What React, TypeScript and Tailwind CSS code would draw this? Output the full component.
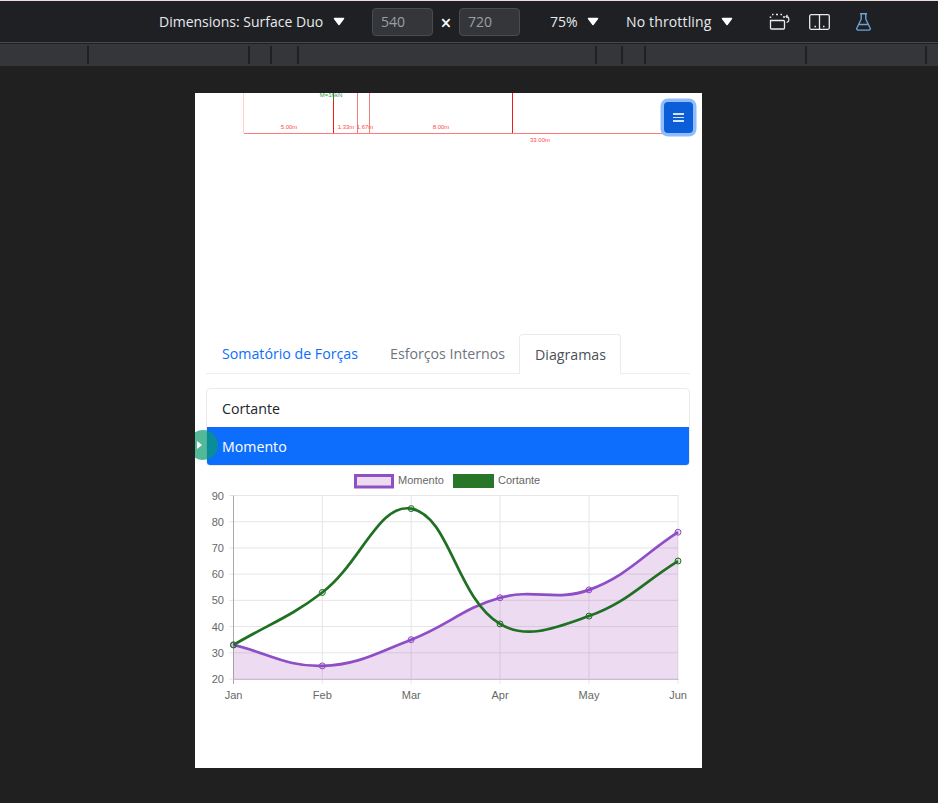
import React from 'react';

type Pt = { x: number; y: number };

const xs = [233.5, 322.3, 411.2, 500, 589, 678];
const yFor = (v: number) => 679 - ((v - 20) * 183.5) / 70;
const toPts = (vals: number[]): Pt[] => vals.map((v, i) => ({ x: xs[i], y: yFor(v) }));

// same bezier control points chart.js uses for tension 0.4
function splinePath(pts: Pt[], t = 0.4) {
  const ctrl = pts.map((cur, i) => {
    const prev = pts[i - 1] ?? cur;
    const next = pts[i + 1] ?? cur;
    const d01 = Math.hypot(cur.x - prev.x, cur.y - prev.y);
    const d12 = Math.hypot(next.x - cur.x, next.y - cur.y);
    const sum = d01 + d12 || 1;
    const fa = (t * d01) / sum;
    const fb = (t * d12) / sum;
    return {
      p: { x: cur.x - fa * (next.x - prev.x), y: cur.y - fa * (next.y - prev.y) },
      n: { x: cur.x + fb * (next.x - prev.x), y: cur.y + fb * (next.y - prev.y) },
    };
  });
  let d = `M${pts[0].x} ${pts[0].y}`;
  for (let i = 1; i < pts.length; i++) {
    d += ` C${ctrl[i - 1].n.x} ${ctrl[i - 1].n.y} ${ctrl[i].p.x} ${ctrl[i].p.y} ${pts[i].x} ${pts[i].y}`;
  }
  return d;
}

const momento = toPts([33, 25, 35, 51, 54, 76]);
const cortante = toPts([33, 53, 85, 41, 44, 65]);
const ticks = [90, 80, 70, 60, 50, 40, 30, 20];
const months = ['Jan', 'Feb', 'Mar', 'Apr', 'May', 'Jun'];

const Caret = () => (
  <svg width="12" height="9" viewBox="0 0 12 9" className="block">
    <path d="M1.5 1.5h9L6 7.5z" fill="#fff" stroke="#fff" strokeWidth="1.5" strokeLinejoin="round" />
  </svg>
);

const Toolbar = () => (
  <div className="h-[43px] shrink-0 flex items-center border-t border-b border-t-[#f0dcdc] border-b-[#48494c] bg-[#1f2023] text-[14px] text-[#e8eaed] font-['Open_Sans',sans-serif]">
    <span className="ml-[159px] w-[165px] whitespace-nowrap">Dimensions: Surface Duo</span>
    <span className="ml-[9px]"><Caret /></span>
    <div className="ml-[27px] w-[61px] h-[28px] pl-2 flex items-center rounded-sm border border-[#4a4b4e] bg-[#35363a] text-[#9aa0a6]">540</div>
    <span className="w-[26px] pt-[3px] text-center text-[19px] leading-none font-semibold text-white">×</span>
    <div className="w-[61px] h-[28px] pl-2 flex items-center rounded-sm border border-[#4a4b4e] bg-[#35363a] text-[#9aa0a6]">720</div>
    <span className="ml-[30px] w-[29px]">75%</span>
    <span className="ml-[8px]"><Caret /></span>
    <span className="ml-[27px] w-[87px] tracking-[0.15px] whitespace-nowrap">No throttling</span>
    <span className="ml-[8px]"><Caret /></span>
    <svg width="22" height="18" viewBox="0 0 22 18" fill="none" stroke="#e8eaed" strokeWidth="1.3" className="ml-[36px]">
      <path d="M1.5 7.5h13a1 1 0 0 1 1 1v6.5a1 1 0 0 1-1 1h-12a1 1 0 0 1-1-1z" />
      <path d="M1.5 5V3.5M3 1.5h1.5M7 1.5h2M11.5 1.5h1.5M15 3v2" strokeWidth="1.5" />
      <path d="M17.5 3.5c3 0 3.5 5.5 0 6M18.5 2l-1.5 1.5 1.5 1.5" strokeWidth="1.1" />
    </svg>
    <svg width="21" height="16" viewBox="0 0 21 16" fill="none" stroke="#e8eaed" strokeWidth="1.3" className="ml-[18px]">
      <rect x="0.7" y="0.7" width="19.6" height="14.6" rx="1.5" />
      <path d="M10.5 1v14M5.5 12.5h1.5M14 12.5h1.5" />
    </svg>
    <svg width="15" height="18" viewBox="0 0 15 18" fill="none" stroke="#6ea3d8" strokeWidth="1.4" className="ml-[26px]">
      <path d="M4 .8h7M5.2 1v5.2L.9 15a1.4 1.4 0 0 0 1.3 2.1h10.6a1.4 1.4 0 0 0 1.3-2.1L9.8 6.2V1M3 11.5h9" />
    </svg>
  </div>
);

const Ruler = () => (
  <div className="h-[22px] mt-px shrink-0 flex items-stretch bg-[#35363a] py-[2px]">
    {[89, 161, 22, 27, 298, 26, 23, 161, 120].map((w, i) => (
      <div key={i} style={{ width: w }} className="border-r-2 border-[#1f2023]" />
    ))}
  </div>
);

const BeamDiagram = () => (
  <svg width="507" height="241" viewBox="195 93 507 241" className="block">
    <g fontFamily="Liberation Sans, sans-serif" fontSize="6" textAnchor="middle">
      <path d="M243.5 93v40" stroke="#ffd0d0" />
      <path d="M244 133.5h420" stroke="#ff7b7b" />
      <path d="M333.5 93v7" stroke="#1f8a2e" />
      <path d="M333.5 100v33" stroke="#f01c1c" />
      <path d="M357.5 93v40M369.5 93v40" stroke="#f27d7d" />
      <path d="M512.5 93v40" stroke="#f01c1c" />
      <text x="331" y="96.5" fill="#3c9a4c">M=16kN</text>
      <text x="289" y="129" fill="#ff4a4a">5.00m</text>
      <text x="346" y="129" fill="#ff4a4a">1.33m</text>
      <text x="365" y="129" fill="#ff4a4a">1.67m</text>
      <text x="441" y="129" fill="#ff4a4a">8.00m</text>
      <text x="540" y="141.5" fill="#ff4a4a">33.00m</text>
    </g>
  </svg>
);

const Chart = () => (
  <svg width="484" height="240" viewBox="206 466 484 240" className="block">
    <g fontFamily="Liberation Sans, sans-serif" fontSize="11" fill="#666" opacity="0.99">
      <rect x="355.5" y="475.5" width="37" height="11.5" fill="#eddcf0" stroke="#8e4ec6" strokeWidth="3" />
      <text x="398" y="484">Momento</text>
      <rect x="453" y="474" width="41" height="14" fill="#277526" />
      <text x="498" y="484">Cortante</text>
      {ticks.map((v) => (
        <g key={v}>
          <path d={`M229 ${yFor(v)}H678.5`} stroke="#e6e6e6" />
          <text x="224" y={yFor(v) + 4} textAnchor="end">{v}</text>
        </g>
      ))}
      {months.map((m, i) => (
        <g key={m}>
          <path d={`M${xs[i]} 495.5V684`} stroke={i === 0 ? '#a8a8a8' : '#e6e6e6'} />
          <text x={xs[i]} y="699" textAnchor="middle">{m}</text>
        </g>
      ))}
    </g>
    <path
      d={`${splinePath(momento)} L678 679 L233.5 679 Z`}
      fill="#8e24aa"
      fillOpacity="0.16"
    />
    <path d="M233.5 679.5H678.5" stroke="#cbbccf" />
    <path d={splinePath(momento)} fill="none" stroke="#8e4ec6" strokeWidth="2.7" />
    <path d={splinePath(cortante)} fill="none" stroke="#1f7023" strokeWidth="2.7" />
    {momento.map((p, i) => (
      <circle key={i} cx={p.x} cy={p.y} r="3" fill="#8e24aa" fillOpacity="0.15" stroke="#8e4ec6" />
    ))}
    {cortante.map((p, i) => (
      <circle key={i} cx={p.x} cy={p.y} r="3" fill="#1f7023" fillOpacity="0.15" stroke="#1f7023" />
    ))}
  </svg>
);

export default function App() {
  return (
    <div className="h-[803px] w-[938px] overflow-hidden flex flex-col bg-[#202021]">
      <Toolbar />
      <Ruler />
      <div className="flex-1 pl-[195px] pt-[27px]">
        <div className="relative w-[507px] h-[675px] bg-white overflow-hidden font-['Open_Sans',sans-serif]">
          <BeamDiagram />

          <button className="absolute left-[469px] top-[9px] w-[29px] h-[31px] rounded-[4px] bg-[#0b5ed7] ring-[3.5px] ring-[#8fbcfd] flex flex-col items-center justify-center gap-[2px]">
            <span className="w-[11px] h-[1.5px] bg-[#d6e4fa]" />
            <span className="w-[11px] h-[1.5px] bg-[#d6e4fa]" />
            <span className="w-[11px] h-[1.5px] bg-[#d6e4fa]" />
          </button>

          <div className="pl-[11px] pr-[12px]">
            <div className="flex h-[40px] border-b border-[#eeeeee] text-[14.2px]">
              <div className="w-[168px] pl-4 pt-[9px] text-[#0d6efd] whitespace-nowrap">Somatório de Forças</div>
              <div className="w-[145px] pl-4 pt-[9px] text-[#6c757d] whitespace-nowrap">Esforços Internos</div>
              <div className="w-[102px] h-[40px] pl-[15px] pt-[9px] rounded-t-[4px] border border-b-0 border-[#e9ecef] bg-white text-[#495057] whitespace-nowrap">Diagramas</div>
            </div>

            <div className="mt-[14px] rounded-[4px] border border-[#eaeaea] overflow-hidden text-[14.2px]">
              <div className="h-[38px] pl-[15px] pt-[1px] flex items-center text-[#212529]">Cortante</div>
              <div className="h-[38px] pl-[15px] pt-[1px] flex items-center bg-[#0d6efd] text-white">Momento</div>
            </div>

            <Chart />
          </div>

          {/* side handle sits over the list */}
          <div className="absolute left-[-7px] top-[337px] w-[30px] h-[30px] rounded-full bg-[#0a9a6c]/70 flex items-center pl-[9px]">
            <span className="w-0 h-0 border-y-[4px] border-y-transparent border-l-[5px] border-l-white" />
          </div>
        </div>
      </div>
    </div>
  );
}
